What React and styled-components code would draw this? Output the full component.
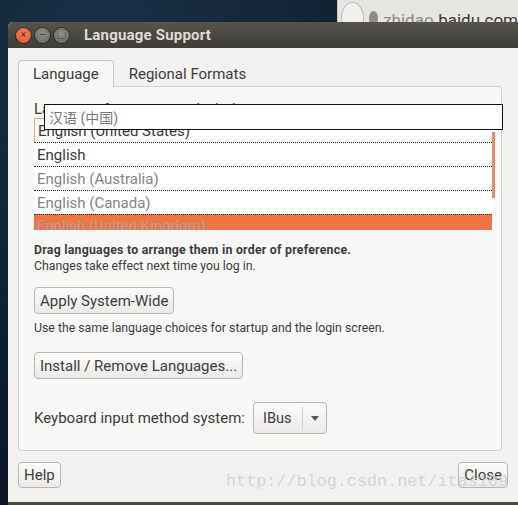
import React from 'react'
import styled, { createGlobalStyle } from 'styled-components'

const Global = createGlobalStyle`
  html, body { margin: 0; padding: 0; }
  body {
    width: 518px;
    height: 505px;
    overflow: hidden;
    background: #0c1824;
    font-family: Roboto, "Noto Sans", "Noto Sans CJK SC", sans-serif;
  }
`

const Desktop = styled.div`
  width: 518px;
  height: 505px;
  display: flex;
  flex-direction: column;
  background: radial-gradient(circle at 20% 10%, #1b3146 0%, #0c1a28 60%, #081019 100%);
  overflow: hidden;
`

const TopStrip = styled.div`
  height: 22px;
  display: flex;
  justify-content: flex-end;
`

const Browser = styled.div`
  width: 177px;
  background: #e6e5e2;
  border-left: 1px solid #c9c8c4;
  display: flex;
  align-items: flex-end;
  padding-left: 3px;
  gap: 5px;
  overflow: hidden;
`

const BackBtn = styled.div`
  width: 30px;
  height: 30px;
  margin-bottom: -12px;
  border-radius: 50%;
  border: 1px solid #bdbcb8;
  background: #f1f0ee;
`

const Globe = styled.div`
  width: 14px;
  height: 14px;
  margin-bottom: -3px;
  border-radius: 50%;
  background: #8d8d8d;
`

const UrlText = styled.div`
  font-size: 17px;
  color: #3a3a3a;
  margin-bottom: -8px;
  white-space: nowrap;
  span { color: #8a8a8a; }
`

const Window = styled.div`
  margin-left: 8px;
  width: 530px;
  flex: 1;
  display: flex;
  flex-direction: column;
  background: #f2f1f0;
  border-radius: 5px 0 0 0;
  border-bottom: 3px solid #4a4946;
  overflow: hidden;
`

const TitleBar = styled.div`
  height: 26px;
  display: flex;
  align-items: center;
  padding-left: 8px;
  gap: 4px;
  background: linear-gradient(#57544e, #3e3d39);
`

const WinButton = styled.div`
  width: 15px;
  height: 15px;
  border-radius: 50%;
  display: flex;
  align-items: center;
  justify-content: center;
  color: ${p => (p.close ? '#5a2410' : '#3c3b37')};
  font-size: 10px;
  line-height: 1;
  background: ${p =>
    p.close
      ? 'radial-gradient(circle at 50% 35%, #f6845a, #de4f1d)'
      : 'radial-gradient(circle at 50% 35%, #8f8d87, #6a6863)'};
  box-shadow: 0 0 0 1px rgba(0, 0, 0, 0.35);
`

const Title = styled.div`
  margin-left: 11px;
  color: #dfdbd2;
  font-size: 15px;
  font-weight: 700;
  letter-spacing: 0.2px;
`

const Body = styled.div`
  flex: 1;
  display: flex;
  flex-direction: column;
  padding: 11px 0 0 10px;
  width: 484px;
`

const Tabs = styled.div`
  display: flex;
  align-items: flex-end;
  height: 27px;
`

const Tab = styled.div`
  height: ${p => (p.active ? '26px' : '24px')};
  padding: 0 14px;
  display: flex;
  align-items: center;
  font-size: 15px;
  color: #3c3c3c;
  background: ${p => (p.active ? '#f7f7f6' : 'transparent')};
  border: 1px solid ${p => (p.active ? '#c8c6c2' : 'transparent')};
  border-bottom: none;
  border-radius: 4px 4px 0 0;
  position: relative;
  z-index: 1;
  margin-bottom: ${p => (p.active ? '-1px' : '0')};
`

const Panel = styled.div`
  height: 350px;
  background: #f7f7f6;
  border: 1px solid #d3d1cd;
  border-radius: 0 3px 3px 3px;
  padding: 13px 14px 0 15px;
  display: flex;
  flex-direction: column;
  position: relative;
`

const ListLabel = styled.div`
  font-size: 15px;
  color: #3c3c3c;
  height: 18px;
`

const Popup = styled.div`
  position: absolute;
  left: 25px;
  top: 17px;
  width: 459px;
  height: 26px;
  background: #fff;
  border: 1px solid #111;
  box-sizing: border-box;
  display: flex;
  align-items: center;
  padding-left: 4px;
  font-size: 14px;
  color: #7a7a7a;
  z-index: 2;
`

const ListWrap = styled.div`
  display: flex;
  width: 461px;
`

const List = styled.div`
  flex: 1;
  display: flex;
  flex-direction: column;
  background: #fff;
`

const Row = styled.div`
  display: flex;
  padding-left: 3px;
  font-size: 15px;
  color: ${p => (p.dim ? '#858585' : '#3a3a3a')};
  border-bottom: ${p => (p.last ? 'none' : '1px dotted #222')};
  border-left: ${p => (p.first ? '1px solid #f3a08a' : 'none')};
  border-top: ${p => (p.first ? '1px solid #f3a08a' : 'none')};
  background: ${p => (p.drop ? '#ef7446' : '#fff')};
  height: ${p => (p.drop ? '15px' : '23px')};
  overflow: hidden;
  align-items: ${p => (p.drop ? 'flex-start' : 'center')};
  line-height: ${p => (p.drop ? '22px' : 'normal')};
  ${p => (p.drop ? 'color: #a8a29c; border-top: 1px dotted #222;' : '')}
`

const Scroll = styled.div`
  width: 3px;
  display: flex;
  flex-direction: column;
  background: #fff;
  &::before {
    content: '';
    display: block;
    margin-top: 14px;
    height: 66px;
    background: #e98a62;
  }
`

const Hint = styled.div`
  margin-top: 12px;
  font-size: 12.3px;
  line-height: 16px;
  color: #3c3c3c;
  b { font-weight: 700; letter-spacing: 0.25px; }
`

const Button = styled.div`
  align-self: flex-start;
  height: 25px;
  padding: 0 5px;
  display: flex;
  align-items: center;
  font-size: 15px;
  color: #3c3c3c;
  border: 1px solid #b8b6b1;
  border-radius: 4px;
  background: linear-gradient(#fbfbfa, #ebeae8);
  box-shadow: inset 0 1px 0 #fff;
  margin-top: ${p => p.top || 0}px;
`

const Note = styled.div`
  margin-top: 7px;
  font-size: 12.3px;
  color: #3c3c3c;
`

const KeyRow = styled.div`
  margin-top: 23px;
  display: flex;
  align-items: center;
  gap: 8px;
  font-size: 15px;
  color: #3c3c3c;
`

const Combo = styled.div`
  height: 30px;
  display: flex;
  align-items: center;
  border: 1px solid #b8b6b1;
  border-radius: 4px;
  background: linear-gradient(#fbfbfa, #ebeae8);
  font-size: 14.5px;
`

const ComboText = styled.div`
  padding: 0 11px 0 9px;
  border-right: 1px solid #cfcdc9;
  height: 22px;
  display: flex;
  align-items: center;
`

const Arrow = styled.div`
  width: 23px;
  display: flex;
  justify-content: center;
  &::after {
    content: '';
    border-left: 4px solid transparent;
    border-right: 4px solid transparent;
    border-top: 5px solid #555;
  }
`

const Footer = styled.div`
  margin-top: 11px;
  display: flex;
  justify-content: space-between;
  align-items: center;
  width: 490px;
  position: relative;
`

const SmallButton = styled(Button)`
  height: 24px;
  padding: 0 5px;
`

const Watermark = styled.div`
  position: absolute;
  left: 208px;
  top: 10px;
  font-family: "Liberation Mono", monospace;
  font-size: 16.8px;
  color: rgba(205, 205, 205, 0.8);
  pointer-events: none;
`

const langs = [
  { name: 'English (United States)', first: true },
  { name: 'English' },
  { name: 'English (Australia)', dim: true },
  { name: 'English (Canada)', dim: true, last: true },
]

export default function App() {
  return (
    <Desktop>
      <Global />
      <TopStrip>
        <Browser>
          <BackBtn />
          <Globe />
          <UrlText>
            <span>zhidao.</span>baidu.com
          </UrlText>
        </Browser>
      </TopStrip>
      <Window>
        <TitleBar>
          <WinButton close>×</WinButton>
          <WinButton>–</WinButton>
          <WinButton>□</WinButton>
          <Title>Language Support</Title>
        </TitleBar>
        <Body>
          <Tabs>
            <Tab active>Language</Tab>
            <Tab>Regional Formats</Tab>
          </Tabs>
          <Panel>
            <ListLabel>Language for menus and windows:</ListLabel>
            <Popup>汉语 (中国)</Popup>
            <ListWrap>
              <List>
                {langs.map(l => (
                  <Row key={l.name} first={l.first} dim={l.dim} last={l.last}>
                    {l.name}
                  </Row>
                ))}
                <Row drop last>English (United Kingdom)</Row>
              </List>
              <Scroll />
            </ListWrap>
            <Hint>
              <b>Drag languages to arrange them in order of preference.</b>
              <br />
              Changes take effect next time you log in.
            </Hint>
            <Button top={13}>Apply System-Wide</Button>
            <Note>Use the same language choices for startup and the login screen.</Note>
            <Button top={17}>Install / Remove Languages...</Button>
            <KeyRow>
              Keyboard input method system:
              <Combo>
                <ComboText>IBus</ComboText>
                <Arrow />
              </Combo>
            </KeyRow>
          </Panel>
          <Footer>
            <SmallButton>Help</SmallButton>
            <Watermark>http://blog.csdn.net/itas109</Watermark>
            <SmallButton>Close</SmallButton>
          </Footer>
        </Body>
      </Window>
    </Desktop>
  )
}
